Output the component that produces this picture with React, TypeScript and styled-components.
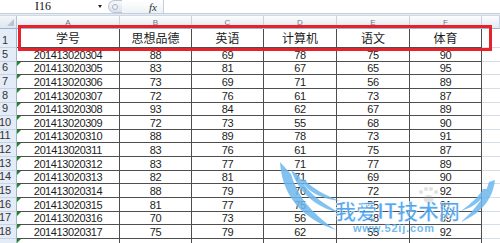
import React from 'react';
import styled, { createGlobalStyle } from 'styled-components';

const COLS = '17px 103px 72px 72px 73px 73px 72px 1fr';
const ROW_H = 13.65;

const Global = createGlobalStyle`
  html, body { margin: 0; padding: 0; background: #fff; }
  body {
    width: 500px; height: 243px; overflow: hidden;
    font-family: "Liberation Sans", "Noto Sans CJK SC", sans-serif;
  }
`;

const Page = styled.div`
  position: relative;
  width: 500px;
  height: 243px;
  overflow: hidden;
  background: #fff;
`;

/* ---------- formula bar ---------- */
const FormulaBar = styled.div`
  display: flex;
  height: 13px;
  background: #fff;
  border-bottom: 1px solid #c3cfdd;
`;

const NameBox = styled.div`
  display: flex;
  align-items: center;
  width: 104px;
  padding-left: 35px;
  box-sizing: border-box;
  font-family: "Liberation Serif", serif;
  font-size: 12px;
  color: #111;
`;

const DropArrow = styled.span`
  margin-left: auto;
  margin-right: 2px;
  width: 0;
  height: 0;
  border-left: 2.5px solid transparent;
  border-right: 2.5px solid transparent;
  border-top: 3px solid #222;
`;

const Splitter = styled.div`
  width: 14px;
  height: 13px;
  margin-left: 4px;
  box-sizing: border-box;
  border: 1px solid #b9c5d3;
  border-right: none;
  border-radius: 7px 0 0 7px;
  background: linear-gradient(#f6f8fb, #dbe2ea);
  display: flex;
  align-items: center;
  padding-left: 3px;
`;

const Knob = styled.span`
  width: 4px;
  height: 4px;
  border-radius: 50%;
  border: 1px solid #a9b5c3;
  background: #eef1f5;
`;

const FxButton = styled.div`
  width: 41px;
  display: flex;
  align-items: center;
  justify-content: flex-end;
  padding-right: 6px;
  box-sizing: border-box;
  background: linear-gradient(#ffffff, #eef2f6);
  font-family: "Liberation Serif", serif;
  font-style: italic;
  font-size: 11px;
  color: #333;
`;

const FormulaInput = styled.div`
  flex: 1;
  border-left: 1px solid #c3cfdd;
  background: #fff;
`;

const Spacer = styled.div`
  height: 1px;
  background: #e6ebf2;
  border-bottom: 1px solid #cfd9e6;
`;

/* ---------- grid ---------- */
const Row = styled.div<{ $h: number }>`
  display: grid;
  grid-template-columns: ${COLS};
  height: ${(p) => p.$h}px;
`;

const Corner = styled.div`
  position: relative;
  background: linear-gradient(#f3f6fa, #dfe6ef);
  border-right: 1px solid #b4c3d5;
  border-bottom: 1px solid #9eb3cb;
  box-sizing: border-box;
  &::after {
    content: '';
    position: absolute;
    right: 2px;
    bottom: 2px;
    width: 0;
    height: 0;
    border-left: 7px solid transparent;
    border-bottom: 7px solid #b8c4d2;
  }
`;

const ColHead = styled.div`
  display: flex;
  align-items: center;
  justify-content: center;
  background: linear-gradient(#fbfcfe, #e3e9f1);
  border-right: 1px solid #c8d3e0;
  border-bottom: 1px solid #9eb3cb;
  box-sizing: border-box;
  font-size: 8px;
  color: #6b7585;
`;

const RowHead = styled.div`
  display: flex;
  align-items: flex-end;
  justify-content: center;
  padding-right: 6px;
  padding-bottom: 1px;
  box-sizing: border-box;
  background: #e4ecf7;
  border-right: 1px solid #9fb4cc;
  border-bottom: 1px solid #c6d3e4;
  font-size: 11px;
  line-height: 11px;
  color: #333;
`;

const Cell = styled.div<{ $title?: boolean }>`
  position: relative;
  display: flex;
  align-items: flex-end;
  justify-content: center;
  padding-bottom: ${(p) => (p.$title ? 2 : 0)}px;
  box-sizing: border-box;
  border-right: 1px solid #4e4e4e;
  border-bottom: 1px solid #4e4e4e;
  font-family: ${(p) =>
    p.$title ? '"Noto Sans CJK SC", sans-serif' : '"Liberation Sans", sans-serif'};
  font-size: ${(p) => (p.$title ? 12 : 11)}px;
  line-height: ${(p) => (p.$title ? 15 : 12)}px;
  letter-spacing: ${(p) => (p.$title ? 0 : -0.4)}px;
  color: #1c1c1c;
  white-space: nowrap;
`;

const GreenMark = styled.span`
  position: absolute;
  left: 0;
  top: 0;
  width: 0;
  height: 0;
  border-top: 4px solid #1f8a1f;
  border-right: 4px solid transparent;
`;

const EmptyCell = styled.div`
  border-bottom: 1px solid #d6dde7;
  box-sizing: border-box;
`;

/* ---------- overlays ---------- */
const RedBox = styled.div`
  position: absolute;
  left: 18px;
  top: 25px;
  width: 474px;
  height: 26px;
  box-sizing: border-box;
  border: 3px solid #e8222b;
  pointer-events: none;
`;

const Watermark = styled.svg`
  position: absolute;
  left: 0;
  top: 0;
  width: 500px;
  height: 243px;
  pointer-events: none;
`;

const letters = ['A', 'B', 'C', 'D', 'E', 'F'];
const titles = ['学号', '思想品德', '英语', '计算机', '语文', '体育'];

const data: [number, string, string, string, string, string, string][] = [
  [5, '201413020304', '88', '69', '78', '75', '90'],
  [6, '201413020305', '83', '81', '67', '65', '95'],
  [7, '201413020306', '73', '69', '71', '56', '89'],
  [8, '201413020307', '72', '76', '61', '73', '87'],
  [9, '201413020308', '93', '84', '62', '67', '89'],
  [10, '201413020309', '72', '73', '55', '68', '90'],
  [11, '201413020310', '88', '89', '78', '73', '91'],
  [12, '201413020311', '83', '76', '61', '75', '87'],
  [13, '201413020312', '83', '77', '71', '77', '89'],
  [14, '201413020313', '82', '81', '71', '69', '90'],
  [15, '201413020314', '88', '79', '70', '72', '92'],
  [16, '201413020315', '81', '77', '75', '55', '91'],
  [17, '201413020316', '70', '73', '56', '48', '89'],
  [18, '201413020317', '75', '79', '62', '55', '92'],
];

export default function App() {
  return (
    <Page>
      <Global />
      <FormulaBar>
        <NameBox>
          I16
          <DropArrow />
        </NameBox>
        <Splitter>
          <Knob />
        </Splitter>
        <FxButton>fx</FxButton>
        <FormulaInput />
      </FormulaBar>
      <Spacer />
      <Row $h={13}>
        <Corner />
        {letters.map((l) => (
          <ColHead key={l}>{l}</ColHead>
        ))}
        <ColHead />
      </Row>
      <Row $h={19}>
        <RowHead>1</RowHead>
        {titles.map((t) => (
          <Cell key={t} $title>
            {t}
          </Cell>
        ))}
        <EmptyCell />
      </Row>
      {data.map((r) => (
        <Row key={r[0]} $h={ROW_H}>
          <RowHead>{r[0]}</RowHead>
          <Cell>
            {r[0] !== 5 && <GreenMark />}
            {r[1]}
          </Cell>
          <Cell>{r[2]}</Cell>
          <Cell>{r[3]}</Cell>
          <Cell>{r[4]}</Cell>
          <Cell>{r[5]}</Cell>
          <Cell>{r[6]}</Cell>
          <EmptyCell />
        </Row>
      ))}
      <Row $h={ROW_H}>
        <RowHead />
        <Cell>
          <GreenMark />
        </Cell>
        <Cell />
        <Cell />
        <Cell />
        <Cell />
        <Cell />
        <EmptyCell />
      </Row>
      <RedBox />
      <Watermark viewBox="0 0 500 243">
        <g fill="#6cb8ee" opacity="0.85">
          <path d="M280,162 C282,194 300,218 336,230 C312,214 297,196 291,174 Z" />
          <path d="M291,170 C299,192 314,207 340,213 C320,202 305,190 299,176 Z" />
          <path d="M300,179 C308,192 321,199 340,201 C323,194 312,188 305,180 Z" />
        </g>
        <g fill="#6cb8ee" opacity="0.85">
          <path d="M495,180 C493,198 482,213 461,222 C476,209 485,196 489,182 Z" />
          <path d="M487,189 C483,200 474,207 461,211 C472,203 479,196 483,189 Z" />
        </g>
        <g fill="#9a9a9a" opacity="0.3">
          <circle cx="421" cy="192" r="2" />
          <circle cx="426" cy="189" r="2" />
          <circle cx="431" cy="189" r="2" />
          <circle cx="436" cy="192" r="2" />
          <ellipse cx="428.5" cy="199" rx="5" ry="4" />
        </g>
        <text
          x="335"
          y="219"
          fontFamily='"Noto Sans CJK SC", sans-serif'
          fontWeight="700"
          fontSize="21"
          fill="#3d9cec"
          stroke="#ffffff"
          strokeWidth="0.6"
          opacity="0.88"
        >
          我爱IT技术网
        </text>
        <text
          x="353"
          y="232"
          fontFamily='"Liberation Sans", sans-serif'
          fontWeight="700"
          fontSize="11"
          letterSpacing="0.8"
          fill="#5aaeea"
          opacity="0.85"
        >
          www.52ij.com
        </text>
      </Watermark>
    </Page>
  );
}
